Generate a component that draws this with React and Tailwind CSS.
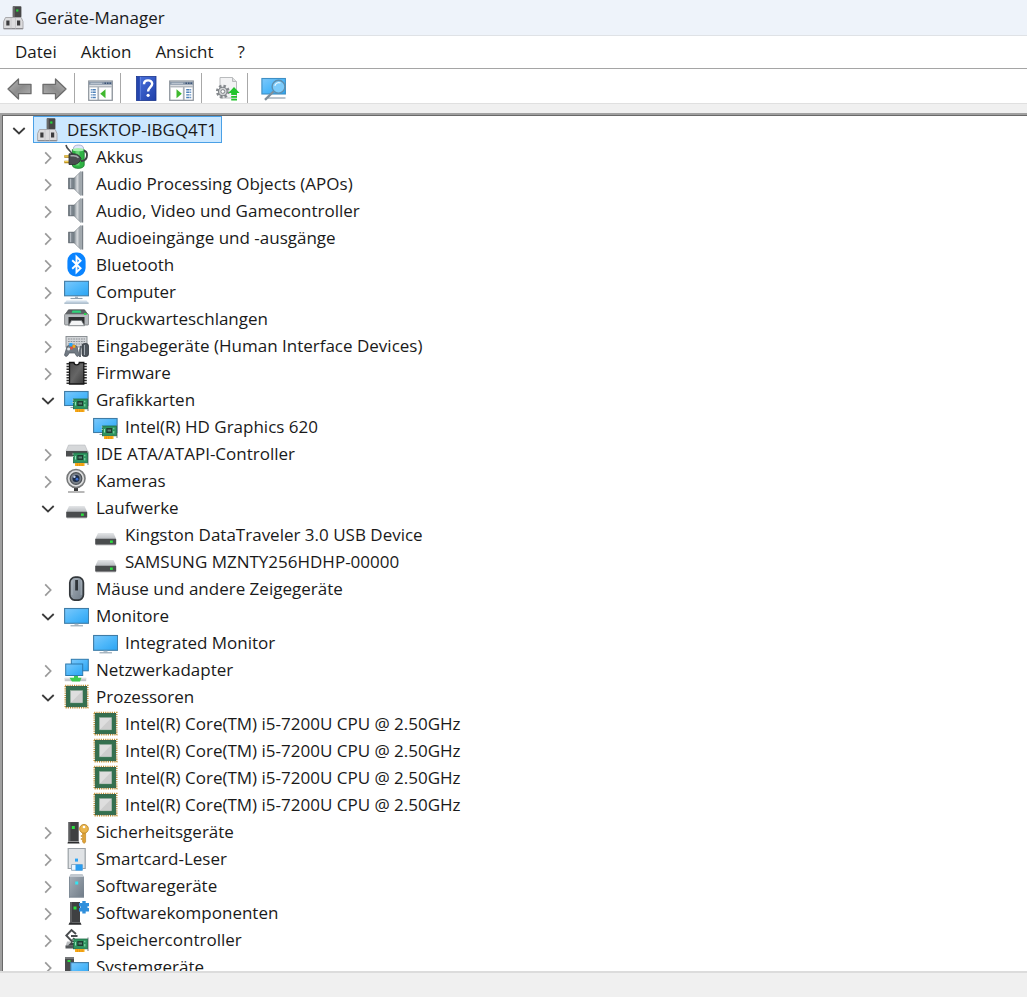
import React, { useState } from 'react';

/* ---------- shared icon pieces ---------- */

function Svg({ children }) {
  return (
    <svg viewBox="0 0 25 25" className="block size-[25px] shrink-0" aria-hidden="true">
      {children}
    </svg>
  );
}

function Gradients() {
  return (
    <svg className="absolute size-0" aria-hidden="true">
      <defs>
        <linearGradient id="screen" x1="0" y1="0" x2="1" y2="1">
          <stop offset="0" stopColor="#7cc8fb" />
          <stop offset="0.5" stopColor="#4fb8fa" />
          <stop offset="1" stopColor="#2ba4f3" />
        </linearGradient>
        <linearGradient id="metal" x1="0" y1="0" x2="0" y2="1">
          <stop offset="0" stopColor="#e4e6e8" />
          <stop offset="1" stopColor="#b8bbbf" />
        </linearGradient>
        <linearGradient id="cone" x1="0" y1="0" x2="1" y2="0">
          <stop offset="0" stopColor="#7d868e" />
          <stop offset="0.5" stopColor="#d9dcdf" />
          <stop offset="1" stopColor="#8b939a" />
        </linearGradient>
        <linearGradient id="dark" x1="0" y1="0" x2="1" y2="1">
          <stop offset="0" stopColor="#4a4a4a" />
          <stop offset="0.5" stopColor="#666" />
          <stop offset="1" stopColor="#3a3a3a" />
        </linearGradient>
        <linearGradient id="arrow" x1="0" y1="0" x2="1" y2="1">
          <stop offset="0" stopColor="#b9b9b9" />
          <stop offset="0.5" stopColor="#8c8c8c" />
          <stop offset="1" stopColor="#b4b4b4" />
        </linearGradient>
        <linearGradient id="book" x1="0" y1="0" x2="1" y2="1">
          <stop offset="0" stopColor="#4c74e0" />
          <stop offset="1" stopColor="#1e3fa8" />
        </linearGradient>
        <linearGradient id="steel" x1="0" y1="0" x2="1" y2="1">
          <stop offset="0" stopColor="#a9b2bb" />
          <stop offset="1" stopColor="#6f7b87" />
        </linearGradient>
      </defs>
    </svg>
  );
}

function Card() {
  return (
    <g>
      <path d="M24 10.500v13.500" stroke="#8b9298" strokeWidth="1.2" />
      <rect x="9.500" y="12" width="13.900" height="9.800" fill="#2f9460" stroke="#1f6b45" strokeWidth="0.8" />
      <path d="M8 13h2M8 15.500h2" stroke="#a9c9b8" strokeWidth="0.8" />
      <rect x="13.300" y="14" width="5.800" height="5" fill="#1d3c30" />
      <rect x="14.500" y="15.500" width="3.500" height="2" fill="#5c8577" />
      <path d="M20.800 13.800v1.500M20.800 17v2.500M11.500 15v3.500" stroke="#8fe0b4" />
      <rect x="11" y="22" width="9.500" height="3" fill="#f8ac1c" />
      <path d="M13.300 22.500v2.500M15.700 22.500v2.500M18.100 22.500v2.500" stroke="#d98200" strokeWidth="0.6" />
    </g>
  );
}

/* ---------- device icons ---------- */

function DeviceManagerIcon() {
  return (
    <Svg>
      <rect x="11.800" y="1.300" width="8.600" height="11" rx="0.8" fill="#474747" />
      <rect x="11.800" y="1.300" width="2" height="11" fill="#6a6a6a" />
      <rect x="15.200" y="4.400" width="2.200" height="2.200" fill="#25d63a" />
      <path d="M4.500 12.500h15.700l1.800 4v7.500H2.600v-7.500z" fill="#dcdcde" stroke="#a3a3a6" strokeWidth="0.9" />
      <path d="M3 23.500h18.800" stroke="#8c8c90" />
      <rect x="5.300" y="15.500" width="3.200" height="5" fill="#3c3c3e" />
      <rect x="16" y="15.500" width="3.200" height="5" fill="#3c3c3e" />
      <path d="M10 13v10.500M14.500 13v10.500" stroke="#c4c4c8" strokeWidth="0.8" />
    </Svg>
  );
}

function BatteryIcon() {
  return (
    <Svg>
      <path d="M9.500 4c0-4 10-4 10 0v3h-10z" fill="#dfe6fb" stroke="#8d97c0" strokeWidth="0.7" />
      <path d="M8.300 5.500h11.900v15.500c0 4.500-11.900 4.500-11.900 0z" fill="#2fb344" stroke="#157a28" strokeWidth="0.8" />
      <ellipse cx="14.200" cy="5.800" rx="5.600" ry="1.700" fill="#a5efab" />
      <path d="M11.500 7.500h4v14h-4z" fill="#7de088" opacity="0.7" />
      <path d="M2 1c.5 3 2 4 3.500 5.500S8 9 8 10.500" fill="none" stroke="#4a4d50" strokeWidth="1.600" />
      <path d="M17 17c5 0 6-3 6-6 0-2.500-1-4-3-4" fill="none" stroke="#3f4245" strokeWidth="1.900" />
      <path d="M0.300 12.500h5M0.300 18h5" stroke="#a87c10" strokeWidth="2.600" />
      <path d="M0.500 12.100h4.500M0.500 17.600h4.500" stroke="#f6d35c" strokeWidth="1.100" />
      <path d="M5 9.800h4.500c4 0 6.500 2.200 7.500 4.700-1 3.500-3.500 6-7.500 6H5z" fill="#4a4d50" stroke="#2a2c2e" strokeWidth="0.8" />
      <path d="M6.500 11.800h3c2.500 0 4 .8 5 2" fill="none" stroke="#a9acaf" strokeWidth="1.500" />
    </Svg>
  );
}

function SpeakerIcon() {
  return (
    <Svg>
      <rect x="4.700" y="7.200" width="5.600" height="10.600" fill="#7b848c" stroke="#545c64" strokeWidth="0.8" />
      <path d="M6.600 7.800v9.500" stroke="#b4bbc1" strokeWidth="1.200" />
      <path d="M10 7.200 16.500.8v23.400L10 17.800z" fill="url(#cone)" stroke="#7b838a" strokeWidth="0.6" />
      <path d="M16.200.5h2.500v24h-2.500z" fill="#a3aab0" />
      <path d="M18.700.5v24" stroke="#5f676e" strokeWidth="0.900" />
    </Svg>
  );
}

function BluetoothIcon() {
  return (
    <Svg>
      <rect x="3.400" y="0.400" width="18.200" height="24.200" rx="8.500" fill="#0a84ff" />
      <path d="M8.200 8.200 16.600 16.200 12.500 20.200V4.800L16.600 8.800 8.200 16.800" fill="none" stroke="#fff" strokeWidth="1.900" />
    </Svg>
  );
}

function ComputerIcon() {
  return (
    <Svg>
      <rect x="0.600" y="2.300" width="24" height="14.500" fill="url(#screen)" stroke="#3f7ca6" strokeWidth="1.100" />
      <path d="M11 17.400h3v2h-3z" fill="#a8b6c2" />
      <path d="M6.500 19.500h12" stroke="#8fa0ae" strokeWidth="1.100" />
      <path d="M2.500 21.500h20l2 2.500H.5z" fill="#cfdde9" />
      <path d="M.3 24.200h24.400" stroke="#8fa6b8" />
    </Svg>
  );
}

function PrinterIcon() {
  return (
    <Svg>
      <path d="M4.500 3.800h16l3 4.200h-22z" fill="#5d6165" stroke="#474b4f" strokeWidth="0.7" />
      <path d="M8.500 4.600h8l.8 2.200h-9.600z" fill="#2ed47a" />
      <rect x="0.600" y="8" width="24" height="11" rx="1" fill="#b5b9bd" stroke="#777b7f" strokeWidth="0.8" />
      <rect x="20" y="7.200" width="2.400" height="1.800" fill="#27e04b" />
      <path d="M4.500 11h16v7.500h-16z" fill="#2e3032" />
      <path d="M7.500 14.500h10l3 5.200H4.500z" fill="#f4f5f6" stroke="#6f7377" strokeWidth="0.8" />
    </Svg>
  );
}

function HidIcon() {
  return (
    <Svg>
      <rect x="2" y="3.500" width="21" height="10.500" fill="#d2d5d8" stroke="#84898e" strokeWidth="0.9" />
      <path d="M4 6h17M4 8.500h17M4 11h17" stroke="#8b9095" strokeWidth="1.200" strokeDasharray="1.700 0.900" />
      <path d="M3 13.500c2-2 8-2 10 0l2 8.500c-1 2.500-3 1.500-4-2H5c-1 3.500-3.500 4.500-4.500 2z" fill="#717a83" stroke="#4b535b" strokeWidth="0.7" />
      <circle cx="4.600" cy="16" r="1.500" fill="#dfe3e6" />
      <rect x="5.300" y="10" width="3.200" height="3.200" fill="#2ba3f5" />
      <rect x="8.500" y="12" width="2.800" height="2.800" fill="#f5a716" />
      <rect x="6.300" y="13.800" width="2.500" height="2.500" fill="#e94e3c" />
      <rect x="18" y="10.500" width="6.500" height="13" rx="2.500" fill="#4f565d" stroke="#333a40" strokeWidth="0.8" />
      <path d="M16 24v-7l1-4" fill="none" stroke="#59616a" strokeWidth="1.800" />
      <path d="M20.500 12v10" stroke="#a3abb2" />
    </Svg>
  );
}

function FirmwareIcon() {
  return (
    <Svg>
      <path d="M4 3v21M21.300 3v21" stroke="#2e2e2e" strokeWidth="3" strokeDasharray="1.500 1.300" />
      <path d="M5.500 2.500h4.500c0 3.200 5.300 3.200 5.300 0h4.500v21.500H5.500z" fill="url(#dark)" stroke="#161616" strokeWidth="1.300" />
    </Svg>
  );
}

function DisplayAdapterIcon() {
  return (
    <Svg>
      <rect x="0.600" y="4.500" width="23.500" height="14" fill="url(#screen)" stroke="#3f7ca6" strokeWidth="1.100" />
      <path d="M6.500 20.500h5" stroke="#8fa0ae" />
      <Card />
    </Svg>
  );
}

function IdeIcon() {
  return (
    <Svg>
      <path d="M4.500 4h16.500l2.500 6H2z" fill="#d6d8da" stroke="#aeb1b4" strokeWidth="0.5" />
      <rect x="2" y="10" width="21.500" height="5.500" fill="#4c4e50" />
      <Card />
    </Svg>
  );
}

function CameraIcon() {
  return (
    <Svg>
      <path d="M10 19h4v4h-4z" fill="#3b3b3b" />
      <path d="M4 24h16.500" stroke="#9a9a9a" strokeWidth="1.400" />
      <circle cx="12" cy="10.500" r="9" fill="#dcddde" stroke="#77797a" strokeWidth="1.600" />
      <circle cx="12" cy="10.500" r="5.800" fill="#7b828a" stroke="#4f5458" strokeWidth="1.300" />
      <circle cx="12" cy="10.500" r="3.500" fill="#1c2c48" />
      <circle cx="13" cy="11.200" r="1.400" fill="#3b6fd1" />
      <circle cx="10.400" cy="8.700" r="1.200" fill="#c6d4ea" />
    </Svg>
  );
}

function DriveIcon() {
  return (
    <Svg>
      <path d="M5 11h15.500l2.700 6H2.200z" fill="url(#metal)" />
      <rect x="2.200" y="16.800" width="21" height="6" rx="0.800" fill="#4a4c4e" />
      <path d="M3 22.800h19.500" stroke="#8b8d8f" strokeWidth="0.8" />
      <rect x="17" y="18.500" width="2.800" height="2.400" fill="#2be03f" />
    </Svg>
  );
}

function MouseIcon() {
  return (
    <Svg>
      <rect x="5.800" y="1.200" width="13.600" height="23" rx="5.500" fill="url(#steel)" stroke="#33373b" strokeWidth="1.700" />
      <path d="M8 4v15M17.200 4v15" stroke="#c0c8d0" strokeWidth="0.7" opacity="0.8" />
      <path d="M12.600 4v10.500" stroke="#2e3338" strokeWidth="2.800" />
    </Svg>
  );
}

function MonitorIcon() {
  return (
    <Svg>
      <rect x="0.600" y="5.500" width="24" height="14.800" fill="url(#screen)" stroke="#3f7ca6" strokeWidth="1.100" />
      <path d="M10.500 20.800h4v1.500h-4z" fill="#b4c0ca" />
      <path d="M6.500 22.800h12.500" stroke="#8fa0ae" strokeWidth="1.100" />
    </Svg>
  );
}

function NetworkIcon() {
  return (
    <Svg>
      <rect x="7.300" y="2.300" width="17" height="11.500" fill="url(#screen)" stroke="#2d79ac" />
      <rect x="1.700" y="7" width="17" height="11.500" fill="url(#screen)" stroke="#2d79ac" />
      <path d="M.7 22.500h21.500" stroke="#c3c6c9" strokeWidth="3.400" />
      <path d="M.7 21.700h21.500" stroke="#e4e6e8" />
      <path d="M10 19h4v1.800h3.500l-1.500 3.700H8l-2.500-3.700H10z" fill="#3ecb52" />
    </Svg>
  );
}

function CpuIcon() {
  return (
    <Svg>
      <rect x="1.200" y="1.400" width="22.600" height="22.300" fill="none" stroke="#c08a28" strokeWidth="1.400" strokeDasharray="1.100 1.100" />
      <rect x="2.300" y="2.400" width="20.400" height="20.300" fill="#34704f" stroke="#26573c" strokeWidth="0.800" />
      <rect x="6.300" y="6.500" width="12.300" height="12.300" fill="#dedede" stroke="#8fa899" strokeWidth="0.600" />
      <path d="M18.300 7v11.500H7z" fill="#cdcdcd" />
    </Svg>
  );
}

function SecurityIcon() {
  return (
    <Svg>
      <path d="M4.500 3h10.200v19H4.500z" fill="#3f4042" />
      <path d="M4.500 3h2v19h-2z" fill="#5d5e60" />
      <path d="M4 22.500h10.800l.8 2H3.500z" fill="#2b2c2e" />
      <rect x="7.800" y="7" width="3" height="3" fill="#2be03f" />
      <path d="M18.600 13h3v10l-1.500 1.500-1.500-1.500z" fill="#dfa236" stroke="#b87f1c" strokeWidth="0.600" />
      <circle cx="20" cy="9.800" r="4.400" fill="#eab54c" stroke="#b87f1c" strokeWidth="0.800" />
      <circle cx="20" cy="8" r="1.300" fill="#fff" />
      <path d="M18.300 17h-1.500M18.300 20h-1.500" stroke="#c98f27" strokeWidth="1.400" />
    </Svg>
  );
}

function SmartcardIcon() {
  return (
    <Svg>
      <path d="M4.200 2.500h17v20h-17z" fill="#e0e3e6" stroke="#9aa0a6" strokeWidth="1.200" />
      <rect x="11" y="12.600" width="3" height="3" fill="#2ba3f5" />
      <path d="M7.500 18.500h10.800v5.800H7.500z" fill="#eaf5fe" stroke="#8ba6ba" strokeWidth="0.900" />
      <path d="M11.500 18.500h7v6h-7z" fill="#2a9df0" />
    </Svg>
  );
}

function SoftwareDeviceIcon() {
  return (
    <Svg>
      <path d="M7 1h11l2 3v20.500H5V4z" fill="url(#steel)" />
      <path d="M7 1h11l2 3H5z" fill="#c2c9d0" />
      <path d="M5.500 4v20.500M5 24h15" stroke="#7d8994" strokeWidth="0.900" />
      <rect x="11.200" y="8.500" width="3" height="3" fill="#35e4f2" />
    </Svg>
  );
}

function SoftwareComponentIcon() {
  return (
    <Svg>
      <path d="M6 2h10v20.500H6z" fill="#3f4042" />
      <path d="M6 2h2v20.500H6z" fill="#5d5e60" />
      <path d="M5.500 22.500h11l1 2.200H4.500z" fill="#2b2c2e" />
      <rect x="9.500" y="6.500" width="3" height="3" fill="#2be03f" />
      <path d="M15 3h3.300V1h3.400v2H25v3.300h-1.500v1.700H25v3.500h-3.300v2h-3.400v-2H15V8h1.500V6.300H15z" fill="#2f8fdc" />
    </Svg>
  );
}

function StorageControllerIcon() {
  return (
    <Svg>
      <path d="M3 14.500h8l1 5H1.500z" fill="#b9bcbf" />
      <path d="M1.500 18.500h10.500v3H1.500z" fill="#55585b" />
      <path d="M4 18.500l5-5 3 3v2z" fill="#3f4245" />
      <path d="M12 7 7.500 3 2.300 8.500l5.200 5.500 3-2.800M7 9h6.500" fill="none" stroke="#494c4f" strokeWidth="1.900" />
      <Card />
    </Svg>
  );
}

function SystemIcon() {
  return (
    <Svg>
      <path d="M1 3h9v22H1z" fill="#4a4c4e" />
      <path d="M1 3h9v2H1z" fill="#77797b" />
      <rect x="3.500" y="6" width="3" height="2" fill="#2be03f" />
      <rect x="6.800" y="8.600" width="17.700" height="13" fill="url(#screen)" stroke="#3f7ca6" strokeWidth="1.100" />
    </Svg>
  );
}

/* ---------- toolbar icons ---------- */

function ArrowIcon({ flip }) {
  return (
    <Svg>
      <path
        d="M1 13 11.500 3v5.300H24v9.400H11.500V23z"
        transform={flip ? 'translate(25 0) scale(-1 1)' : undefined}
        fill="url(#arrow)"
        stroke="#6c6c6c"
        strokeWidth="1.300"
        strokeLinejoin="round"
      />
    </Svg>
  );
}

function PaneIcon({ right }) {
  return (
    <Svg>
      <rect x="0.700" y="5" width="23.600" height="19.300" fill="#e9ebee" stroke="#8c939b" strokeWidth="1.200" />
      <path d="M1 7.300h23" stroke="#8796a8" strokeWidth="3" />
      <path d="M2.500 7.300h11.500" stroke="#c6cfd9" />
      <path d="M16.500 7.300h1.500M19 7.300h1.500M21.500 7.300h1.500" stroke="#3d5578" strokeWidth="1.500" />
      <path d="M1 10.500h23" stroke="#b5bac0" strokeWidth="1.500" />
      <g transform={right ? 'translate(25 0) scale(-1 1)' : undefined}>
        <path d="M1.800 12h7.200v11.300H1.800z" fill="#fff" />
        <path d="M2.800 13.700h5M2.800 16.300h5M2.800 18.900h5M2.800 21.500h5" stroke="#4b7fb8" strokeWidth="1.400" strokeDasharray="1 .6 3.400" />
        <path d="M10.200 11v13" stroke="#9ba2aa" strokeWidth="1.200" />
        <path d="M11.500 12h11.500v11.300H11.500z" fill="#fff" />
        <path d="M17.500 13.200v9l-5.300-4.500z" fill="#3fb82e" />
      </g>
    </Svg>
  );
}

function HelpIcon() {
  return (
    <Svg>
      <rect x="2.500" y="0.500" width="19.500" height="24" fill="url(#book)" stroke="#18348c" strokeWidth="0.800" />
      <path d="M3 .8h3v23.400H3z" fill="#2546ae" />
      <path d="M6.300.8v23.400" stroke="#7f9cec" strokeWidth="0.600" />
      <path d="M10 8.200c0-5 8.200-5 8.200-.4 0 3.200-4.100 3.500-4.100 7.700" fill="none" stroke="#fff" strokeWidth="2.400" />
      <circle cx="14.100" cy="19.300" r="1.600" fill="#fff" />
    </Svg>
  );
}

function UpdateDriverIcon() {
  return (
    <Svg>
      <path d="M5 1.500h12.500l4 4V22H5z" fill="#f3f3f4" stroke="#b9bbbd" />
      <path d="M17.500 1.500v4h4" fill="#dedfe0" stroke="#b9bbbd" />
      <circle cx="7.800" cy="15.500" r="5.400" fill="none" stroke="#85898d" strokeWidth="3" strokeDasharray="2.300 1.940" />
      <circle cx="7.800" cy="15.500" r="4.300" fill="#d0d2d4" stroke="#7f8387" strokeWidth="1.100" />
      <circle cx="7.800" cy="15.500" r="1.900" fill="#fff" stroke="#7f8387" />
      <path d="M19 11 24.600 17H22v2h-5.800v-2h-2.800z" fill="#22c42d" />
      <path d="M16.200 20.800H22M16.200 23.600H22" stroke="#22c42d" strokeWidth="1.800" />
    </Svg>
  );
}

function ScanIcon() {
  return (
    <Svg>
      <rect x="0.900" y="2.500" width="23.500" height="15.500" fill="url(#screen)" stroke="#3f8fc4" strokeWidth="1.100" />
      <path d="M7 22h17.500" stroke="#a9b6c1" strokeWidth="1.600" />
      <path d="M12.500 15.500 4 23.800" stroke="#7f8f9c" strokeWidth="2.400" />
      <circle cx="17.500" cy="10.700" r="6.400" fill="#7ccbfb" stroke="#5f8fae" strokeWidth="1.400" />
      <path d="M13.800 9.800c.8-2.800 3.500-3.800 5.700-2.800" fill="none" stroke="#e3f5ff" strokeWidth="1.300" />
    </Svg>
  );
}

/* ---------- data ---------- */

const cpu = 'Intel(R) Core(TM) i5-7200U CPU @ 2.50GHz';

const categories = [
  { name: 'Akkus', icon: BatteryIcon },
  { name: 'Audio Processing Objects (APOs)', icon: SpeakerIcon },
  { name: 'Audio, Video und Gamecontroller', icon: SpeakerIcon },
  { name: 'Audioeingänge und -ausgänge', icon: SpeakerIcon },
  { name: 'Bluetooth', icon: BluetoothIcon },
  { name: 'Computer', icon: ComputerIcon },
  { name: 'Druckwarteschlangen', icon: PrinterIcon },
  { name: 'Eingabegeräte (Human Interface Devices)', icon: HidIcon },
  { name: 'Firmware', icon: FirmwareIcon },
  { name: 'Grafikkarten', icon: DisplayAdapterIcon, devices: ['Intel(R) HD Graphics 620'] },
  { name: 'IDE ATA/ATAPI-Controller', icon: IdeIcon },
  { name: 'Kameras', icon: CameraIcon },
  {
    name: 'Laufwerke',
    icon: DriveIcon,
    devices: ['Kingston DataTraveler 3.0 USB Device', 'SAMSUNG MZNTY256HDHP-00000'],
  },
  { name: 'Mäuse und andere Zeigegeräte', icon: MouseIcon },
  { name: 'Monitore', icon: MonitorIcon, devices: ['Integrated Monitor'] },
  { name: 'Netzwerkadapter', icon: NetworkIcon },
  { name: 'Prozessoren', icon: CpuIcon, devices: [cpu, cpu, cpu, cpu] },
  { name: 'Sicherheitsgeräte', icon: SecurityIcon },
  { name: 'Smartcard-Leser', icon: SmartcardIcon },
  { name: 'Softwaregeräte', icon: SoftwareDeviceIcon },
  { name: 'Softwarekomponenten', icon: SoftwareComponentIcon },
  { name: 'Speichercontroller', icon: StorageControllerIcon },
  { name: 'Systemgeräte', icon: SystemIcon },
];

/* ---------- layout ---------- */

function Chevron({ open, label, onClick }) {
  return (
    <button type="button" aria-label={label} aria-expanded={open} onClick={onClick} className="size-4 shrink-0">
      <svg viewBox="0 0 16 16" className="block size-4" fill="none" aria-hidden="true">
        {open ? (
          <path d="M2.300 6 8 11.500 13.700 6" stroke="#3b3b3b" strokeWidth="1.800" />
        ) : (
          <path d="M5.200 3.300 10.700 9l-5.500 5.700" stroke="#9a9a9a" strokeWidth="1.700" />
        )}
      </svg>
    </button>
  );
}

function Row({ icon: Icon, name, selected, chevron }) {
  return (
    <div className="flex h-[27px] items-center gap-1.5">
      {chevron || <span className="size-4 shrink-0" />}
      <span
        className={`flex items-center gap-[7px] whitespace-nowrap border pl-px pr-1 ${
          selected ? 'border-[#4aa0e6] bg-[#cce8ff]' : 'border-transparent'
        }`}
      >
        <Icon />
        <span className="leading-[25px]">{name}</span>
      </span>
    </div>
  );
}

function Category({ name, icon, devices }) {
  const [open, setOpen] = useState(Boolean(devices));
  return (
    <li>
      <Row
        icon={icon}
        name={name}
        chevron={<Chevron open={open} label={name} onClick={() => setOpen(!open)} />}
      />
      {open && devices && (
        <ul className="pl-[29px]">
          {devices.map((d, i) => (
            <li key={i}>
              <Row icon={icon} name={d} />
            </li>
          ))}
        </ul>
      )}
    </li>
  );
}

function Separator() {
  return <span className="ml-[7px] mr-[13px] h-[30px] w-px bg-[#a8a8a8]" />;
}

function ToolButton({ label, children }) {
  return (
    <button type="button" aria-label={label} className="hover:bg-sky-100">
      {children}
    </button>
  );
}

export default function App() {
  const [rootOpen, setRootOpen] = useState(true);
  return (
    <div className="flex h-screen flex-col overflow-hidden bg-[#f0f0f0] font-['Open_Sans','Noto_Sans',sans-serif] text-[17px] text-[#1a1a1a]">
      <Gradients />
      <header className="flex h-[35px] shrink-0 items-center gap-[9px] bg-[#eef3fa] pl-px">
        <DeviceManagerIcon />
        <h1>Geräte-Manager</h1>
      </header>

      <nav className="flex h-[34px] shrink-0 items-center border-b border-t border-b-[#a5a5a5] border-t-[#dfe2e6] bg-white pl-[3px]">
        {['Datei', 'Aktion', 'Ansicht', '?'].map((m) => (
          <button key={m} type="button" className="px-3 hover:bg-sky-100">
            {m}
          </button>
        ))}
      </nav>

      <div className="flex h-[35px] shrink-0 items-center border-b border-[#e0e0e0] bg-white pl-[7px] pt-1">
        <div className="flex gap-[10px]">
          <ToolButton label="Zurück"><ArrowIcon /></ToolButton>
          <ToolButton label="Vorwärts"><ArrowIcon flip /></ToolButton>
        </div>
        <Separator />
        <ToolButton label="Konsolenstruktur"><PaneIcon /></ToolButton>
        <Separator />
        <div className="flex gap-[10px]">
          <ToolButton label="Hilfe"><HelpIcon /></ToolButton>
          <ToolButton label="Aktionsbereich"><PaneIcon right /></ToolButton>
        </div>
        <Separator />
        <ToolButton label="Treiber aktualisieren"><UpdateDriverIcon /></ToolButton>
        <Separator />
        <ToolButton label="Nach geänderter Hardware suchen"><ScanIcon /></ToolButton>
      </div>

      <main className="mt-[9px] min-h-0 flex-1 overflow-hidden border-l-2 border-t-2 border-[#a0a0a0] bg-white pl-[9px] pt-px shadow-[inset_1px_1px_0_#696969]">
        <Row
          icon={DeviceManagerIcon}
          name="DESKTOP-IBGQ4T1"
          selected
          chevron={<Chevron open={rootOpen} label="DESKTOP-IBGQ4T1" onClick={() => setRootOpen(!rootOpen)} />}
        />
        {rootOpen && (
          <ul className="pl-[29px]">
            {categories.map((c) => (
              <Category key={c.name} {...c} />
            ))}
          </ul>
        )}
      </main>

      <footer className="h-[26px] shrink-0 border-t-2 border-[#dcdcdc] bg-[#f0f0f0]" />
    </div>
  );
}
